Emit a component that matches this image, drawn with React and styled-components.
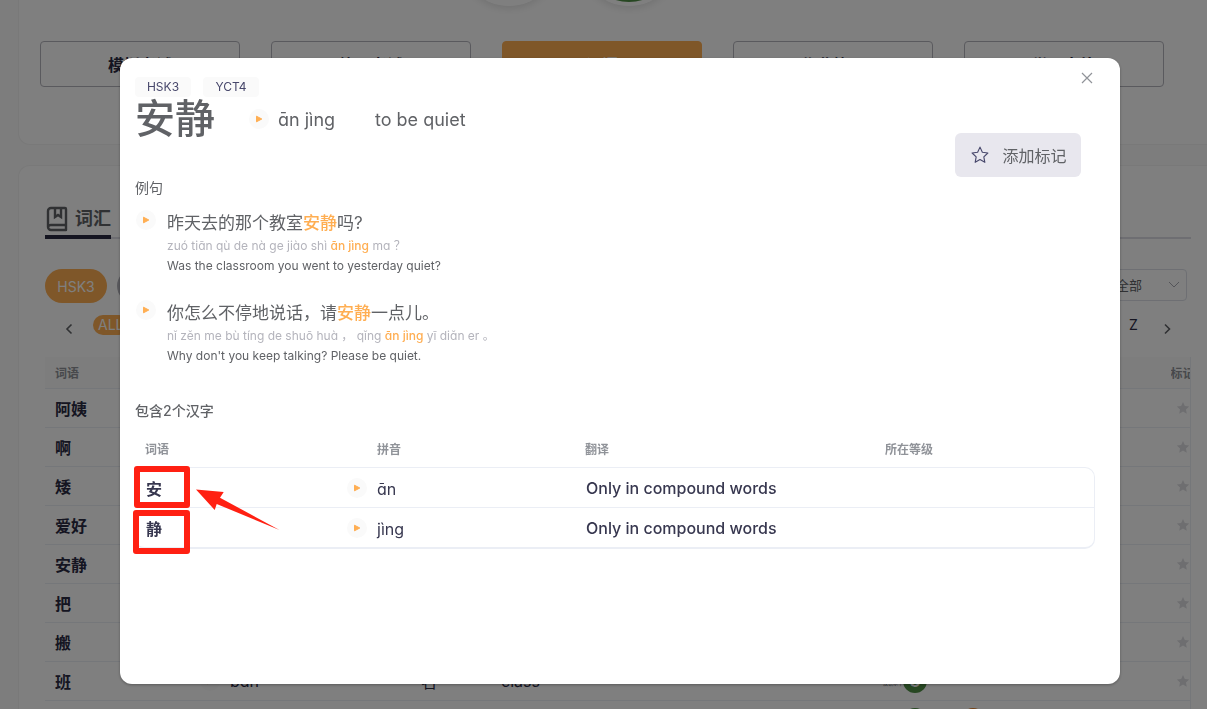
import React from 'react'
import styled, { createGlobalStyle, css } from 'styled-components'

const latin = `Inter, 'Noto Sans CJK SC', sans-serif`

const GlobalStyle = createGlobalStyle`
  * { box-sizing: border-box; }
  body {
    margin: 0;
    background: #fafafa;
    color: #2b2b43;
    font-family: ${latin};
    font-size: 16px;
  }
  button { font-family: inherit; cursor: pointer; }
`

const Page = styled.main`
  height: 100vh;
  overflow: hidden;
  padding-left: 18px;
`
const Card = styled.section`
  background: #fff;
  border: 1px solid #f2f2f2;
  border-right: 0;
`
const LevelCard = styled(Card)`
  height: 145px;
  border-top: 0;
  border-radius: 0 0 0 12px;
  padding: 0 43px 0 21px;
`
const Circles = styled.div`
  display: flex;
  justify-content: center;
  align-items: flex-end;
  gap: 20px;
  height: 6px;
  margin-bottom: 35px;
  padding-right: 67px;
`
const Circle = styled.span`
  display: flex;
  flex: none;
  width: 100px;
  height: 100px;
  padding: 4px;
  border-radius: 50%;
  background: #fff;
  box-shadow: 0 2px 8px rgba(0, 0, 0, 0.12);
`
const Disc = styled.span`
  flex: 1;
  border-radius: 50%;
  background: ${p => p.$color};
`
const Tabs = styled.nav`
  display: flex;
  gap: 31px;
`
const TabBtn = styled.button`
  flex: 1;
  height: 46px;
  border: 1px solid #b4b4bc;
  border-radius: 4px;
  background: #fff;
  color: #2b2b43;
  font-size: 16px;
  font-weight: 700;
  ${p => p.$active && css`
    background: #ffae52;
    border-color: #ffae52;
    color: #fff;
  `}
`
const WordCard = styled(Card)`
  height: 800px;
  margin-top: 20px;
  border-radius: 12px 0 0 0;
  padding: 38px 16px 0 26px;
`
const Heading = styled.div`
  display: flex;
  border-bottom: 2px solid #dcdce4;
`
const HeadingTab = styled.h2`
  display: flex;
  align-items: center;
  gap: 6px;
  height: 35px;
  margin: 0 0 -2px;
  padding-bottom: 2px;
  color: #606266;
  font-size: 18px;
  font-weight: 700;
  line-height: 24px;
  border-bottom: 4px solid #2b2b43;
  border-radius: 2px 2px 0 0;
`
const Filters = styled.div`
  display: flex;
  gap: 10px;
  align-items: center;
  margin-top: 30px;
  padding-right: 4px;
`
const Pill = styled.button`
  width: 62px;
  height: 34px;
  padding: 0;
  border: 0;
  border-radius: 17px;
  background: ${p => (p.$active ? '#ffae52' : '#b4b4bc')};
  color: #fff;
  font-size: 14px;
`
const SelectBox = styled.label`
  position: relative;
  display: flex;
  align-items: center;
  align-self: flex-start;
  margin-left: auto;
  svg {
    position: absolute;
    right: 6px;
    pointer-events: none;
  }
`
const Select = styled.select`
  width: 84px;
  height: 32px;
  padding: 0 12px;
  appearance: none;
  border: 1px solid #dcdfe6;
  border-radius: 4px;
  background: #fff;
  color: #606266;
  font-family: ${latin};
  font-size: 13px;
`
const Letters = styled.div`
  display: flex;
  align-items: center;
  gap: 16px;
  height: 20px;
  margin-top: 12px;
  padding: 0 16px;
`
const LetterList = styled.div`
  flex: 1;
  display: flex;
  justify-content: space-between;
`
const LetterBtn = styled.button`
  height: 20px;
  padding: 0 5px;
  border: 0;
  border-radius: 10px;
  background: ${p => (p.$active ? '#ffae52' : 'transparent')};
  color: ${p => (p.$active ? '#fff' : '#2b2b43')};
  font-size: 14px;
  line-height: 20px;
`
const ArrowBtn = styled.button`
  display: flex;
  padding: 8px 0 0;
  border: 0;
  background: transparent;
  color: #606266;
`
const WordTable = styled.table`
  width: 100%;
  margin-top: 22px;
  border-collapse: collapse;
  table-layout: fixed;
  border-right: 1px solid #ebeef5;
  th, td {
    padding: 0 0 0 10px;
    text-align: left;
    white-space: nowrap;
    overflow: hidden;
    border-bottom: 1px solid #ebeef5;
  }
  th {
    height: 31px;
    background: #fafafa;
    color: #909399;
    font-size: 12px;
    font-weight: 700;
  }
  td { height: 39px; }
  td:first-child { font-weight: 700; }
  td:last-child, th:last-child { padding: 0; }
  td:last-child svg { display: block; margin-left: auto; }
`
const Levels = styled.span`
  display: flex;
  align-items: center;
`
const SmallPrint = styled.span`
  width: 20px;
  padding-top: 4px;
  color: #606266;
  font-size: 5px;
`
const LevelDot = styled.span`
  width: 24px;
  height: 24px;
  margin-right: 34px;
  border-radius: 50%;
  background: ${p => p.$color};
  color: #fff;
  font-weight: 700;
  line-height: 24px;
  text-align: center;
`
const Pinyin = styled.span`
  font-family: ${latin};
  font-feature-settings: 'cv11';
`

const Overlay = styled.div`
  position: fixed;
  inset: 0;
  display: flex;
  padding: 58px 87px 25px 120px;
  background: rgba(0, 0, 0, 0.5);
`
const Dialog = styled.div`
  flex: 1;
  min-width: 0;
  padding: 19px 25px 0 15px;
  border-radius: 12px;
  background: #fff;
  box-shadow: 0 1px 3px rgba(0, 0, 0, 0.3);
`
const CloseBtn = styled.button`
  position: absolute;
  top: 65px;
  right: 107px;
  display: flex;
  padding: 4px;
  border: 0;
  background: transparent;
  color: #909399;
`
const Tags = styled.div`
  display: flex;
  gap: 12px;
`
const Tag = styled.span`
  width: 56px;
  height: 20px;
  border-radius: 4px;
  background: #fafafa;
  color: #47476b;
  font-size: 12px;
  line-height: 20px;
  text-align: center;
`
const WordHead = styled.div`
  display: flex;
  align-items: center;
  height: 44px;
  color: #606266;
  font-size: 18px;
`
const Word = styled.h1`
  width: 114px;
  margin: 0;
  font-size: 40px;
  font-weight: 500;
  line-height: 44px;
`
const WordPinyin = styled(Pinyin)`
  width: 97px;
  margin-left: 9px;
  font-size: 18px;
`
const PlayBtn = styled.button`
  display: flex;
  align-items: center;
  justify-content: center;
  flex: none;
  width: 20px;
  height: 20px;
  padding: 0;
  border: 0;
  border-radius: 50%;
  background: #fafafa;
`
const MarkRow = styled.div`
  display: flex;
  justify-content: flex-end;
  height: 37px;
  padding-right: 14px;
`
const MarkBtn = styled.button`
  display: flex;
  align-items: center;
  justify-content: center;
  gap: 13px;
  width: 126px;
  height: 44px;
  margin-top: -8px;
  padding: 0 0 0 2px;
  border: 0;
  border-radius: 6px;
  background: #e8e7ee;
  color: #606266;
  font-size: 16px;
`
const SectionTitle = styled.h3`
  margin: ${p => (p.$strong ? '23px 0 0' : 0)};
  color: #606266;
  font-size: 14px;
  font-weight: ${p => (p.$strong ? 500 : 400)};
  line-height: 20px;
`
const Sentence = styled.article`
  display: flex;
  gap: 11px;
  height: 90px;
  padding: 12px 0 0 1px;
  color: #606266;
`
const Lines = styled.div`
  display: flex;
  flex-direction: column;
  padding-top: 1px;
  font-size: 12px;
  line-height: 20px;
`
const Hanzi = styled.span`
  font-size: 17px;
  line-height: 25px;
`
const SentencePinyin = styled(Pinyin)`
  color: #b4b4bc;
`
const Mark = styled.em`
  color: #ffae52;
  font-style: normal;
  font-weight: ${p => (p.$strong ? 500 : 400)};
`
const charCols = css`
  display: grid;
  grid-template-columns: 201px 239px 300px 1fr;
  align-items: center;
`
const CharTable = styled.table`
  display: block;
  margin-top: 9px;
  thead, tbody { display: block; }
  tbody {
    border: 1px solid #ebeef5;
    border-left: 0;
    border-bottom-width: 2px;
    border-radius: 10px;
  }
  tr { ${charCols} }
  thead tr { height: 37px; }
  tbody tr { height: 39px; }
  tbody tr + tr { height: 40px; border-top: 1px solid #ebeef5; }
  th {
    padding: 0 0 0 10px;
    color: #909399;
    font-size: 12px;
    font-weight: 700;
    text-align: left;
  }
  th:nth-child(2) { padding-left: 41px; }
  td { padding: 0 0 0 11px; color: #37374f; font-weight: 500; }
  td:first-child { font-weight: 700; }
  td ${Pinyin} { padding-top: 3px; }
`
const PinyinCell = styled.div`
  display: flex;
  align-items: center;
  gap: 10px;
  font-weight: 400;
`

const Callout = styled.svg`
  position: absolute;
  left: 133px;
  top: 465px;
  pointer-events: none;
`

const Play = () => (
  <PlayBtn type="button" aria-label="play">
    <svg width="8" height="8" viewBox="0 0 8 8">
      <path d="M1.5 1.2v5.6L6.8 4z" fill="#ffae52" stroke="#ffae52" strokeLinejoin="round" />
    </svg>
  </PlayBtn>
)

const STAR = 'M8 1l2.1 4.6 4.9.6-3.6 3.4.9 4.9L8 12.1l-4.3 2.4.9-4.9L1 6.2l4.9-.6z'

const tabs = ['模拟考试', '练习考试', '词语', '作业练习', '学习卡片']
const words = ['阿姨', '啊', '矮', '爱好', '安静', '把', '搬']
const sentences = [
  {
    hanzi: ['昨天去的那个教室', '安静', '吗?'],
    pinyin: ['zuó tiān qù de nà ge jiào shì ', 'ān jìng', ' ma ？'],
    en: 'Was the classroom you went to yesterday quiet?',
  },
  {
    hanzi: ['你怎么不停地说话，请', '安静', '一点儿。'],
    pinyin: ['nǐ zěn me bù tíng de shuō huà ， qǐng ', 'ān jìng', ' yī diǎn er 。'],
    en: "Why don't you keep talking? Please be quiet.",
  },
]
const chars = [
  { hanzi: '安', pinyin: 'ān', en: 'Only in compound words' },
  { hanzi: '静', pinyin: 'jìng', en: 'Only in compound words' },
]

function StarCell() {
  return (
    <td>
      <svg width="14" height="14" viewBox="0 0 16 16"><path d={STAR} fill="#dcdce0" /></svg>
    </td>
  )
}

function Background() {
  return (
    <Page>
      <LevelCard>
        <Circles>
          <Circle />
          <Circle><Disc $color="#4f8f45" /></Circle>
        </Circles>
        <Tabs>
          {tabs.map((t, i) => <TabBtn key={t} type="button" $active={i === 2}>{t}</TabBtn>)}
        </Tabs>
      </LevelCard>
      <WordCard>
        <Heading>
          <HeadingTab>
            <svg width="24" height="26" viewBox="0 0 24 26" fill="none" stroke="currentColor" strokeWidth="2.4">
              <path d="M21 19V3a1 1 0 0 0-1-1H6a3 3 0 0 0-3 3v16a3 3 0 0 0 3 3h15v-5H6a3 3 0 0 0-3 2" strokeLinejoin="round" />
              <path d="M10 2v9l3-2 3 2V2" />
            </svg>
            词汇
          </HeadingTab>
        </Heading>
        <Filters>
          <Pill type="button" $active>HSK3</Pill>
          <Pill type="button">HSK4</Pill>
          <SelectBox>
            <Select aria-label="全部"><option>全部</option></Select>
            <svg width="14" height="14" viewBox="0 0 14 14" fill="none" stroke="#a8abb2">
              <path d="M2 4l5 5 5-5" />
            </svg>
          </SelectBox>
        </Filters>
        <Letters>
          <ArrowBtn type="button" aria-label="prev">
            <svg width="16" height="12" viewBox="0 0 16 12" fill="none" stroke="currentColor" strokeWidth="1.6">
              <path d="M10.5 1.5L6 6l4.5 4.5" />
            </svg>
          </ArrowBtn>
          <LetterList>
            <LetterBtn type="button" $active>ALL</LetterBtn>
            {'ABCDEFGHJKLMNOPQRSTWXYZ'.split('').map(l => <LetterBtn key={l} type="button">{l}</LetterBtn>)}
          </LetterList>
          <ArrowBtn type="button" aria-label="next">
            <svg width="16" height="12" viewBox="0 0 16 12" fill="none" stroke="currentColor" strokeWidth="1.6">
              <path d="M6 1.5L10.5 6L6 10.5" />
            </svg>
          </ArrowBtn>
        </Letters>
        <WordTable>
          <colgroup>
            <col width="145" /><col width="221" /><col width="80" /><col width="382" /><col /><col width="20" />
          </colgroup>
          <thead>
            <tr><th>词语</th><th>拼音</th><th>词性</th><th>翻译</th><th>所在等级</th><th>标记</th></tr>
          </thead>
          <tbody>
            {words.map(w => <tr key={w}><td>{w}</td><td /><td /><td /><td /><StarCell /></tr>)}
            <tr>
              <td>班</td>
              <td><PinyinCell><Play /><Pinyin>bān</Pinyin></PinyinCell></td>
              <td>名</td>
              <td>class</td>
              <td><Levels><SmallPrint>汉语水平</SmallPrint><LevelDot $color="#4f8f45">3</LevelDot></Levels></td>
              <StarCell />
            </tr>
            <tr>
              <td>般</td><td /><td /><td />
              <td>
                <Levels>
                  <SmallPrint>汉语水平</SmallPrint>
                  <LevelDot $color="#4f8f45">3</LevelDot>
                  <LevelDot $color="#e8842c">4</LevelDot>
                </Levels>
              </td>
              <StarCell />
            </tr>
          </tbody>
        </WordTable>
      </WordCard>
    </Page>
  )
}

export default function App() {
  return (
    <>
      <GlobalStyle />
      <Background />
      <Overlay>
        <Dialog role="dialog" aria-label="安静">
          <CloseBtn type="button" aria-label="close">
            <svg width="18" height="18" viewBox="0 0 18 18" fill="none" stroke="currentColor" strokeWidth="1.2">
              <path d="M4 4l10 10M14 4L4 14" />
            </svg>
          </CloseBtn>
          <Tags><Tag>HSK3</Tag><Tag>YCT4</Tag></Tags>
          <WordHead>
            <Word>安静</Word>
            <Play />
            <WordPinyin>ān jìng</WordPinyin>
            <span>to be quiet</span>
          </WordHead>
          <MarkRow>
            <MarkBtn type="button">
              <svg width="18" height="18" viewBox="0 0 16 16" fill="none" stroke="#47476b" strokeLinejoin="round"><path d={STAR} /></svg>
              添加标记
            </MarkBtn>
          </MarkRow>
          <SectionTitle>例句</SectionTitle>
          {sentences.map(s => (
            <Sentence key={s.en}>
              <Play />
              <Lines>
                <Hanzi>{s.hanzi[0]}<Mark $strong>{s.hanzi[1]}</Mark>{s.hanzi[2]}</Hanzi>
                <SentencePinyin>{s.pinyin[0]}<Mark $strong>{s.pinyin[1]}</Mark>{s.pinyin[2]}</SentencePinyin>
                <span>{s.en}</span>
              </Lines>
            </Sentence>
          ))}
          <SectionTitle $strong>包含2个汉字</SectionTitle>
          <CharTable>
            <thead>
              <tr><th>词语</th><th>拼音</th><th>翻译</th><th>所在等级</th></tr>
            </thead>
            <tbody>
              {chars.map(c => (
                <tr key={c.hanzi}>
                  <td>{c.hanzi}</td>
                  <td><PinyinCell><Play /><Pinyin>{c.pinyin}</Pinyin></PinyinCell></td>
                  <td>{c.en}</td>
                  <td />
                </tr>
              ))}
            </tbody>
          </CharTable>
        </Dialog>
        <Callout width="150" height="90" viewBox="0 0 150 90">
          <g fill="none" stroke="#ff2012" strokeWidth="6" strokeLinejoin="round">
            <rect x="4" y="4" width="50" height="36" />
            <rect x="3" y="48" width="51" height="38" />
          </g>
          <path d="M63 24.5L90.700 27L87 32.700L146.500 65L83.700 39L81.700 45z" fill="#ff2012" />
        </Callout>
      </Overlay>
    </>
  )
}
